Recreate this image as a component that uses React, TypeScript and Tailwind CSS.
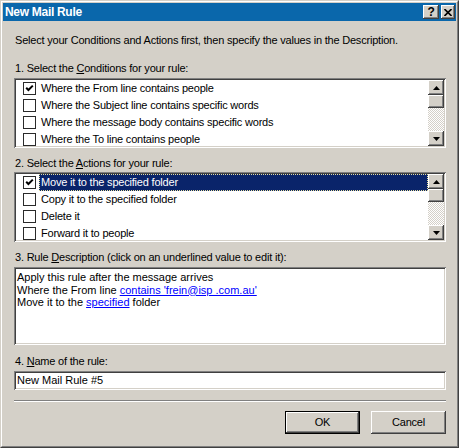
import React from 'react';

const sunken =
  'shadow-[inset_1px_1px_0_#808080,inset_-1px_-1px_0_#ffffff,inset_2px_2px_0_#404040,inset_-2px_-2px_0_#d4d0c8]';
const raised =
  'shadow-[inset_-1px_-1px_0_#404040,inset_1px_1px_0_#ffffff,inset_-2px_-2px_0_#808080]';

const conditions = [
  { label: 'Where the From line contains people', checked: true },
  { label: 'Where the Subject line contains specific words', checked: false },
  { label: 'Where the message body contains specific words', checked: false },
  { label: 'Where the To line contains people', checked: false },
];

const actions = [
  { label: 'Move it to the specified folder', checked: true },
  { label: 'Copy it to the specified folder', checked: false },
  { label: 'Delete it', checked: false },
  { label: 'Forward it to people', checked: false },
];

function CheckBox({ checked }: { checked: boolean }) {
  return (
    <div className="ml-[7px] w-[13px] h-[13px] shrink-0 bg-white border border-[#2a2a2a] flex items-center justify-center">
      {checked && (
        <svg width="11" height="11" viewBox="0 0 11 11">
          <path d="M2.2 4.8 L4.4 7 L8.8 2.6" stroke="#000" strokeWidth="2" fill="none" />
        </svg>
      )}
    </div>
  );
}

function Arrow({ up }: { up: boolean }) {
  return (
    <svg width="7" height="4" viewBox="0 0 7 4">
      {up ? <polygon points="3.5,0 7,4 0,4" fill="#000" /> : <polygon points="0,0 7,0 3.5,4" fill="#000" />}
    </svg>
  );
}

function ScrollBar() {
  return (
    <div className="w-[16px] shrink-0 flex flex-col">
      <div className={`h-[15px] bg-[#d4d0c8] flex items-center justify-center ${raised}`}>
        <Arrow up />
      </div>
      <div className={`h-[13px] bg-[#d4d0c8] ${raised}`} />
      <div className="flex-1 bg-[repeating-conic-gradient(#ffffff_0%_25%,#d4d0c8_0%_50%)] bg-[length:2px_2px]" />
      <div className={`h-[15px] bg-[#d4d0c8] flex items-center justify-center ${raised}`}>
        <Arrow up={false} />
      </div>
    </div>
  );
}

function ListBox({ items, selected }: { items: { label: string; checked: boolean }[]; selected?: number }) {
  return (
    <div className={`h-[70px] bg-white p-[2px] flex ${sunken}`}>
      <div className="flex-1 overflow-hidden">
        {items.map((item, i) => (
          <div key={item.label} className="h-[17px] flex items-center">
            <CheckBox checked={item.checked} />
            <span
              className={`ml-[3px] px-[2px] h-[17px] flex-1 flex items-center whitespace-nowrap ${
                i === selected
                  ? 'bg-[#0a246a] text-white outline-1 outline-dotted outline-[#e8e0a0] -outline-offset-1'
                  : ''
              }`}
            >
              {item.label}
            </span>
          </div>
        ))}
      </div>
      <ScrollBar />
    </div>
  );
}

function Label({ before, key_, after }: { before: string; key_: string; after: string }) {
  return (
    <div className="h-[13px] leading-[13px] pl-[1px]">
      {before}
      <span className="underline underline-offset-1">{key_}</span>
      {after}
    </div>
  );
}

function Button({ children, isDefault }: { children: React.ReactNode; isDefault?: boolean }) {
  return (
    <div className={`w-[75px] h-[23px] ${isDefault ? 'border border-black' : ''}`}>
      <div className={`w-full h-full bg-[#d4d0c8] flex items-center justify-center ${raised}`}>{children}</div>
    </div>
  );
}

export default function App() {
  return (
    <div
      className="w-[459px] h-[448px] bg-[#d4d0c8] border border-t-[#d4d0c8] border-l-[#d4d0c8] border-r-[#404040] border-b-[#404040] text-[11px] tracking-[-0.2px] text-black"
      style={{ fontFamily: '"Liberation Sans", Arial, sans-serif' }}
    >
      <div className="h-full border border-t-white border-l-white border-r-[#808080] border-b-[#808080] p-px flex flex-col">
        {/* title bar */}
        <div className="h-[18px] bg-[#0a67ab] flex items-center pl-[2px] pr-[1px]">
          <div className="flex-1 text-white font-bold text-[12px] tracking-[-0.3px] leading-none">New Mail Rule</div>
          <div className={`w-[16px] h-[14px] bg-[#d4d0c8] flex items-center justify-center font-bold text-[12px] leading-none ${raised}`}>
            ?
          </div>
          <div className={`ml-[2px] w-[14px] h-[14px] bg-[#d4d0c8] flex items-center justify-center ${raised}`}>
            <svg width="8" height="7" viewBox="0 0 8 7">
              <path d="M0.5 0 L7.5 7 M7.5 0 L0.5 7" stroke="#000" strokeWidth="1.6" />
            </svg>
          </div>
        </div>

        {/* body */}
        <div className="flex-1 flex flex-col pl-[11px] pr-[10px]">
          <div className="mt-[13px] h-[13px] leading-[13px] pl-[1px]">
            Select your Conditions and Actions first, then specify the values in the Description.
          </div>

          <div className="mt-[15px]">
            <Label before="1. Select the " key_="C" after="onditions for your rule:" />
          </div>
          <div className="mt-[3px]">
            <ListBox items={conditions} />
          </div>

          <div className="mt-[9px]">
            <Label before="2. Select the " key_="A" after="ctions for your rule:" />
          </div>
          <div className="mt-[2px]">
            <ListBox items={actions} selected={0} />
          </div>

          <div className="mt-[9px]">
            <Label before="3. Rule " key_="D" after="escription (click on an underlined value to edit it):" />
          </div>
          <div className={`mt-[3px] h-[78px] bg-white pt-[4px] pl-[3px] leading-[12.5px] tracking-normal ${sunken}`}>
            <div>Apply this rule after the message arrives</div>
            <div>
              Where the From line <span className="text-[#0000ff] underline">contains 'frein@isp .com.au'</span>
            </div>
            <div>
              Move it to the <span className="text-[#0000ff] underline">specified</span> folder
            </div>
          </div>

          <div className="mt-[10px]">
            <Label before="4. " key_="N" after="ame of the rule:" />
          </div>
          <div className={`mt-[3px] h-[19px] bg-white pl-[3px] flex items-center tracking-normal ${sunken}`}>
            New Mail Rule #5
          </div>

          <div className="mt-[10px] border-t border-t-[#808080] border-b border-b-white" />

          <div className="mt-[9px] flex justify-end gap-[11px]">
            <Button isDefault>OK</Button>
            <Button>Cancel</Button>
          </div>
        </div>
      </div>
    </div>
  );
}
